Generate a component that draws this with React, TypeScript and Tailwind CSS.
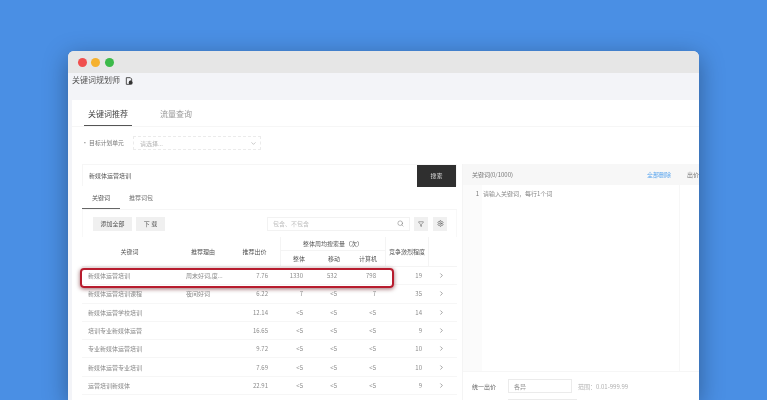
import { ChevronDown, ChevronRight, Search, Filter, Settings } from "lucide-react";

const ROWS = [
  { kw: "新媒体运营培训", why: "周末好词,度...", price: "7.76", all: "1330", mob: "532", pc: "798", comp: "19" },
  { kw: "新媒体运营培训课程", why: "夜间好词", price: "6.22", all: "7", mob: "<5", pc: "7", comp: "35" },
  { kw: "新媒体运营学校培训", why: "", price: "12.14", all: "<5", mob: "<5", pc: "<5", comp: "14" },
  { kw: "培训专业新媒体运营", why: "", price: "16.65", all: "<5", mob: "<5", pc: "<5", comp: "9" },
  { kw: "专业新媒体运营培训", why: "", price: "9.72", all: "<5", mob: "<5", pc: "<5", comp: "10" },
  { kw: "新媒体运营专业培训", why: "", price: "7.69", all: "<5", mob: "<5", pc: "<5", comp: "10" },
  { kw: "运营培训新媒体", why: "", price: "22.91", all: "<5", mob: "<5", pc: "<5", comp: "9" },
];

const COLS = "grid-cols-[95px_52px_52px_36px_34px_35px_43px_27px]";

function TableHead() {
  return (
    <div className={`grid ${COLS} grid-rows-[14px_15px] border-b border-[#f4f4f4] text-[6px] text-[#555]`}>
      <div className="row-span-2 flex items-center justify-center">关键词</div>
      <div className="row-span-2 flex items-center justify-center">推荐理由</div>
      <div className="row-span-2 flex items-center justify-center border-r border-[#f4f4f4]">推荐出价</div>
      <div className="col-span-3 flex items-center justify-center border-b border-r border-[#f4f4f4]">整体周均搜索量（次）</div>
      <div className="row-span-2 flex items-center justify-center border-r border-[#f4f4f4]">竞争激烈程度</div>
      <div className="row-span-2" />
      <div className="flex items-center justify-center">整体</div>
      <div className="flex items-center justify-center">移动</div>
      <div className="flex items-center justify-center border-r border-[#f4f4f4]">计算机</div>
    </div>
  );
}

function TableRow({ row, marked }: { row: (typeof ROWS)[number]; marked: boolean }) {
  return (
    <div className={`relative grid ${COLS} h-[18.3px] items-center border-b border-[#f6f6f6] text-[6px] text-[#8a8a8a]`}>
      <span className="pl-[6px]">{row.kw}</span>
      <span className="pl-[9px] whitespace-nowrap">{row.why}</span>
      <span className="pr-[13px] text-right">{row.price}</span>
      <span className="pr-[14px] text-right">{row.all}</span>
      <span className="pr-[14px] text-right">{row.mob}</span>
      <span className="pr-[10px] text-right">{row.pc}</span>
      <span className="pr-[7px] text-right">{row.comp}</span>
      <ChevronRight className="ml-[9px] h-[7px] w-[7px] text-[#666]" strokeWidth={2} />
      {marked && (
        <div className="absolute left-[-2px] top-[1px] h-[20px] w-[314px] rounded-[4px] border-[2.5px] border-[#b71c2e] shadow-[0_1px_4px_rgba(90,0,10,0.6)]" />
      )}
    </div>
  );
}

function LeftPanel() {
  return (
    <div className="w-[375px] shrink-0">
      <div className="flex h-[22px] items-center border border-b-0 border-[#f6f6f6] bg-white">
        <span className="pl-[6px] text-[6px] text-[#555]">新媒体运营培训</span>
        <button className="ml-auto flex h-[22px] w-[39px] items-center justify-center bg-[#2f2f2f] text-[6px] text-[#ddd]">搜索</button>
      </div>
      <div className="flex h-[24px] border-b border-[#f6f6f6]">
        <div className="flex w-[38px] items-center justify-center border-b-[1.5px] border-[#666] text-[6px] text-[#555]">关键词</div>
        <div className="ml-[9px] flex items-center text-[6px] text-[#777]">推荐词包</div>
      </div>
      <div className="flex h-[27px] items-center border-x border-[#f8f8f8] pl-[10px] pr-[9px]">
        <button className="h-[14px] w-[39px] bg-[#f0f0f0] text-[6px] text-[#555]">添加全部</button>
        <button className="ml-[4px] h-[14px] w-[29px] bg-[#f0f0f0] text-[6px] text-[#555]">下 载</button>
        <div className="ml-auto flex h-[14px] w-[143px] items-center justify-between border border-[#f2f2f2] px-[5px] text-[6px] text-[#c0c0c0]">
          <span>包含、不包含</span>
          <Search className="h-[7px] w-[7px] text-[#666]" strokeWidth={1.5} />
        </div>
        <div className="ml-[4px] flex h-[14px] w-[14px] items-center justify-center bg-[#f0f0f0]">
          <Filter className="h-[6px] w-[6px] text-[#555]" strokeWidth={2} />
        </div>
        <div className="ml-[5px] flex h-[14px] w-[14px] items-center justify-center bg-[#f0f0f0]">
          <Settings className="h-[7px] w-[7px] text-[#555]" strokeWidth={2} />
        </div>
      </div>
      <TableHead />
      {ROWS.map((r, i) => (
        <TableRow key={r.kw} row={r} marked={i === 0} />
      ))}
    </div>
  );
}

function RightPanel() {
  return (
    <div className="ml-[5px] flex h-[260px] min-w-0 flex-1 flex-col border-l border-[#f4f4f4]">
      <div className="flex h-[21px] shrink-0 items-center bg-[#f7f7f7] pl-[9px] text-[6px] text-[#777]">
        <span>关键词(0/1000)</span>
        <span className="ml-auto text-[#5aa5ee]">全部删除</span>
        <span className="ml-[16px] w-[12px] overflow-hidden whitespace-nowrap">出价</span>
      </div>
      <div className="flex h-[187px] shrink-0 border-b border-[#f6f6f6]">
        <div className="flex w-[19px] justify-end bg-[#fbfbfb] pr-[3px] pt-[4px] text-[6px] text-[#777]">1</div>
        <div className="w-[198px] border-r border-[#f7f7f7] pl-[1px] pt-[4px] text-[6px] text-[#888]">请输入关键词，每行1个词</div>
      </div>
      <div className="flex items-center pl-[9px] pt-[7px] text-[6px]">
        <span className="w-[36px] text-[#666]">统一出价</span>
        <div className="flex h-[14px] w-[64px] items-center border border-[#ebebeb] pl-[5px] text-[#999]">各异</div>
        <span className="ml-[6px] text-[#b0b0b0]">范围：0.01-999.99</span>
      </div>
      <div className="ml-[45px] mt-[6px] h-[14px] w-[69px] border border-[#ebebeb]" />
    </div>
  );
}

export default function App() {
  return (
    <div className="h-[400px] w-[767px] overflow-hidden bg-[#4a8fe4] pl-[68px] pt-[51px] font-['Noto_Sans_CJK_SC',sans-serif]">
      <div className="h-[349px] w-[631px] overflow-hidden rounded-t-[6px] bg-[#f3f4f8] shadow-[0_6px_24px_rgba(0,0,0,0.35)] blur-[0.45px]">
        <div className="flex h-[22px] items-center gap-[4.5px] bg-[#e6e6e6] pl-[9.5px]">
          <span className="h-[9px] w-[9px] rounded-full bg-[#f0504f]" />
          <span className="h-[9px] w-[9px] rounded-full bg-[#f5b12e]" />
          <span className="h-[9px] w-[9px] rounded-full bg-[#3cba4a]" />
        </div>
        <div className="flex h-[27px] items-start gap-[5px] pl-[4px] text-[8px] leading-[14px] text-[#555]">
          <span>关键词规划师</span>
          <svg viewBox="0 0 12 12" className="mt-[4px] h-[8px] w-[8px]">
            <path d="M2 1h6l2 2v3H7v5H2z" fill="none" stroke="#444" strokeWidth="1.4" />
            <circle cx="8.5" cy="8.5" r="3" fill="#333" />
          </svg>
        </div>
        <div className="ml-[4px] h-[300px] bg-white pl-[10px]">
          <div className="-ml-[10px] flex h-[27px] items-end border-b border-[#f6f6f6] pl-[12px]">
            <div className="flex h-[27px] w-[48px] items-center justify-center border-b-[1.5px] border-[#555] pt-[3px] text-[8px] text-[#444]">关键词推荐</div>
            <div className="ml-[28px] flex h-[27px] items-center pt-[3px] text-[8px] text-[#999]">流量查询</div>
          </div>
          <div className="flex h-[37px] items-center pb-[5px]">
            <span className="w-[51px] whitespace-nowrap text-[5.8px] text-[#777]">• 目标计划单元</span>
            <div className="flex h-[14px] w-[128px] items-center justify-between border border-dashed border-[#ebebeb] pl-[6px] pr-[3px] text-[6px] text-[#b5b5b5]">
              <span>请选择...</span>
              <ChevronDown className="h-[7px] w-[7px] text-[#888]" strokeWidth={1.5} />
            </div>
          </div>
          <div className="flex">
            <LeftPanel />
            <RightPanel />
          </div>
        </div>
      </div>
    </div>
  );
}
